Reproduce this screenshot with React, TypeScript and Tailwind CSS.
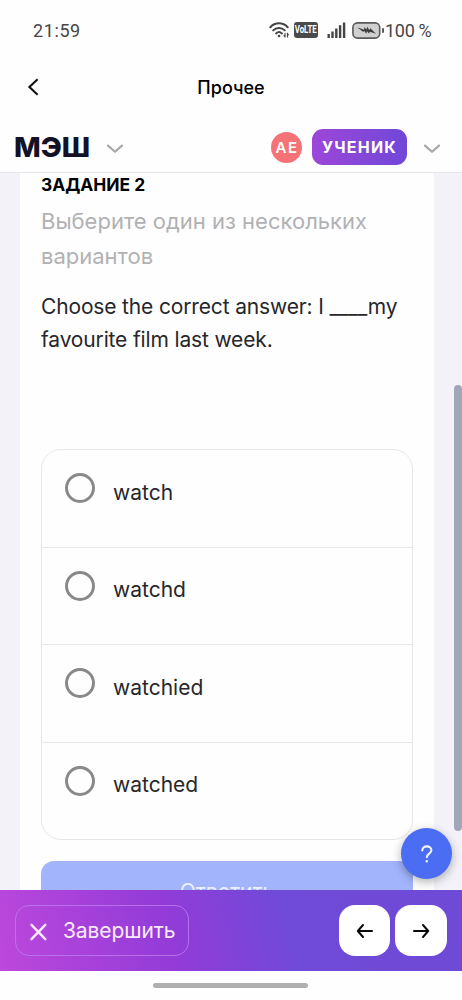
import React from 'react';

const options = ['watch', 'watchd', 'watchied', 'watched'];

const WifiIcon: React.FC = () => (
  <svg width="22" height="18" viewBox="0 0 22 18" fill="none" stroke="#454545" strokeWidth="2" strokeLinecap="round">
    <path d="M1.3 6.2C6.2 1 13.8 1 18.7 6.2" />
    <path d="M4.2 9.4c3.3-3.3 8.3-3.3 11.6 0" />
    <path d="M7.1 12.4c1.7-1.6 4.1-1.6 5.8 0" />
    <circle cx="10" cy="15" r="1.3" fill="#454545" stroke="none" />
    <path d="M16 12.4v3.6M18.4 12.4v3.6M15 14.6l1 1.4M19.4 13.8l-1-1.4" strokeWidth="1.1" />
  </svg>
);

const SignalIcon: React.FC = () => (
  <svg width="19" height="16" viewBox="0 0 19 16" fill="#454545">
    <rect x="0.5" y="12" width="2.4" height="4" />
    <rect x="4.3" y="9.5" width="2.4" height="6.5" />
    <rect x="8.1" y="6.5" width="2.4" height="9.5" />
    <rect x="11.9" y="3.2" width="2.4" height="12.8" />
    <rect x="15.9" y="0.5" width="2.4" height="15.5" />
  </svg>
);

const BatteryIcon: React.FC = () => (
  <svg width="33" height="17" viewBox="0 0 33 17" fill="none">
    <rect x="0.9" y="0.9" width="26.8" height="15.2" rx="4.5" fill="#cfcfcf" stroke="#5a5a5a" strokeWidth="1.6" />
    <path d="M5 5.2l7 2.6.5-2.5 2 2.2.7-2.7 2.1 3.2 1-1.8 5.7 5.6-6.2-2-.8 1.7-2-2.2-.8 2.4-2-3-.8 1.4z" fill="#3d3d3d" />
    <path d="M31 6.2v4.6" stroke="#5a5a5a" strokeWidth="2" />
  </svg>
);

const ChevronDown: React.FC = () => (
  <svg width="18" height="11" viewBox="0 0 18 11" fill="none" stroke="#a8a8a8" strokeWidth="2.2" strokeLinecap="round" strokeLinejoin="round">
    <path d="M2 2.6l7 6.2 7-6.2" />
  </svg>
);

const StatusBar: React.FC = () => (
  <div className="flex h-[60px] shrink-0 items-center pl-[33px] font-['Roboto',sans-serif] text-[18px] text-[#454545]">
    <span className="w-[236px] tracking-[0.6px]">21:59</span>
    <WifiIcon />
    <span className="ml-[3px] flex h-4 w-6 items-center justify-center rounded-[3px] bg-[#4a4a4a]">
      <span className="scale-x-75 text-[10.5px] leading-none font-bold text-white">VoLTE</span>
    </span>
    <span className="ml-[9px]"><SignalIcon /></span>
    <span className="ml-[6px]"><BatteryIcon /></span>
    <span className="tracking-[-0.3px] whitespace-nowrap">100 %</span>
  </div>
);

const Header: React.FC = () => (
  <>
    <div className="grid h-[54px] shrink-0 grid-cols-[60px_1fr_60px] items-center">
      <svg className="ml-[27px]" width="12" height="18" viewBox="0 0 12 18" fill="none" stroke="#111" strokeWidth="2.1">
        <path d="M10.6 1.2L2.4 9l8.2 7.8" />
      </svg>
      <h1 className="text-center text-[18px] font-medium text-black">Прочее</h1>
    </div>
    <div className="flex h-[59px] shrink-0 items-center border-b border-[#e4e4e8] pt-[8px] pl-[14px]">
      <span className="w-[76px] pt-[2px]">
        <span className="inline-block origin-left scale-x-[1.03] text-[27.5px] leading-none font-extrabold text-[#121127]">МЭШ</span>
      </span>
      <span className="mt-[3px] ml-4"><ChevronDown /></span>
      <span className="ml-[147px] flex size-[31px] items-center justify-center rounded-full bg-[#f57377] pt-[3px] pl-px text-[15px] font-semibold tracking-[1.5px] text-white">
        АЕ
      </span>
      <span className="ml-[10px] flex h-9 w-[95px] items-center justify-center rounded-[11px] bg-linear-to-r from-[#9c46d8] to-[#7047d8] text-[16px] font-bold tracking-[1.2px] text-white">
        УЧЕНИК
      </span>
      <span className="mt-[3px] ml-4"><ChevronDown /></span>
    </div>
  </>
);

const BottomBar: React.FC = () => (
  <div className="relative z-10 flex h-[81px] shrink-0 items-center bg-[linear-gradient(75deg,#bd48dc_0%,#913bd8_38%,#704ad8_62%,#6f4ad6_100%)] pl-[15px]">
    <button className="flex h-[51px] w-[174px] items-center rounded-[14px] border border-[#b970eb] pl-[14px] text-[21px] tracking-[-0.1px] text-[#fbeaff]">
      <svg className="mt-[2px]" width="18" height="18" viewBox="0 0 18 18" fill="none" stroke="currentColor" strokeWidth="2.4" strokeLinecap="round">
        <path d="M1.5 1.8L15.3 16.2M15.3 1.8L1.5 16.2" />
      </svg>
      <span className="ml-[15px]">Завершить</span>
    </button>
    <button className="ml-[150px] flex size-[51px] items-center justify-center rounded-[16px] bg-white">
      <svg width="18" height="16" viewBox="0 0 18 16" fill="none" stroke="#090909" strokeWidth="2" strokeLinecap="round" strokeLinejoin="round">
        <path d="M16 8H2M7 2L1.8 8 7 14" />
      </svg>
    </button>
    <button className="ml-[5px] flex h-[51px] w-[52px] items-center justify-center rounded-[16px] bg-white">
      <svg width="18" height="16" viewBox="0 0 18 16" fill="none" stroke="#090909" strokeWidth="2" strokeLinecap="round" strokeLinejoin="round">
        <path d="M2 8h14M11 2l5.2 6-5.2 6" />
      </svg>
    </button>
  </div>
);

const App: React.FC = () => {
  return (
    <div className="flex h-[1000px] w-[462px] flex-col overflow-hidden bg-[#fefefe] font-['Inter',sans-serif]">
      <StatusBar />
      <Header />
      <div className="relative h-[717px] shrink-0 bg-[#f3f2f8] pr-[28px] pl-[20px]">
        <main className="h-full overflow-hidden bg-[#fefefe] px-[21px]">
          <h2 className="mt-px h-[22px] text-[17.4px] leading-[22px] font-bold whitespace-nowrap text-black">ЗАДАНИЕ 2</h2>
          <p className="mt-[8px] text-[22px] leading-[35px] whitespace-nowrap text-[#b1b1b4]">
            Выберите один из нескольких
            <br />
            вариантов
          </p>
          <p className="mt-[16px] text-[21px] leading-[33px] font-[430] tracking-[-0.15px] whitespace-nowrap text-[#27272b]">
            Choose the correct answer: I ____my
            <br />
            favourite film last week.
          </p>
          <div className="mt-[93px] h-[391px] divide-y divide-[#e7e7e9] rounded-[20px] border border-[#e7e7e9]">
            {options.map((option) => (
              <label key={option} className="flex h-[97.5px] pl-[23px]">
                <span className="mt-[23px] size-[30px] rounded-full border-3 border-[#89898c]" />
                <span className="mt-[29.5px] ml-[18px] text-[21px] leading-[25px] font-[430] text-[#27272b]">{option}</span>
              </label>
            ))}
          </div>
          <button className="mt-[21px] flex h-[61px] w-full items-center justify-center rounded-t-[13px] bg-[#a2b4fc] text-[21px] text-[#edf0fd]">
            Ответить
          </button>
        </main>
        {/* scroll thumb */}
        <div className="absolute top-[212px] right-0 h-[446px] w-2 rounded-full bg-[#a2a7b8]" />
        <button className="absolute top-[655px] right-[10px] flex size-[51px] items-center justify-center rounded-full bg-[#4b6df3] shadow-[0_3px_10px_rgba(0,0,0,0.3)]">
          <svg width="12" height="18" viewBox="0 0 12 18" fill="none" stroke="#f2f6ff" strokeWidth="2.1" strokeLinecap="round">
            <path d="M1.3 5.4C1.3 3 3.2 1.4 5.8 1.4s4.6 1.5 4.6 3.9c0 3.2-4.6 3.4-4.6 7" />
            <circle cx="5.8" cy="16.3" r="1.2" fill="#f2f6ff" stroke="none" />
          </svg>
        </button>
      </div>
      <BottomBar />
      <div className="mt-[12px] ml-[153px] h-[5px] w-[155px] shrink-0 rounded-full bg-[#b0b0b0]" />
    </div>
  );
};

export default App;
